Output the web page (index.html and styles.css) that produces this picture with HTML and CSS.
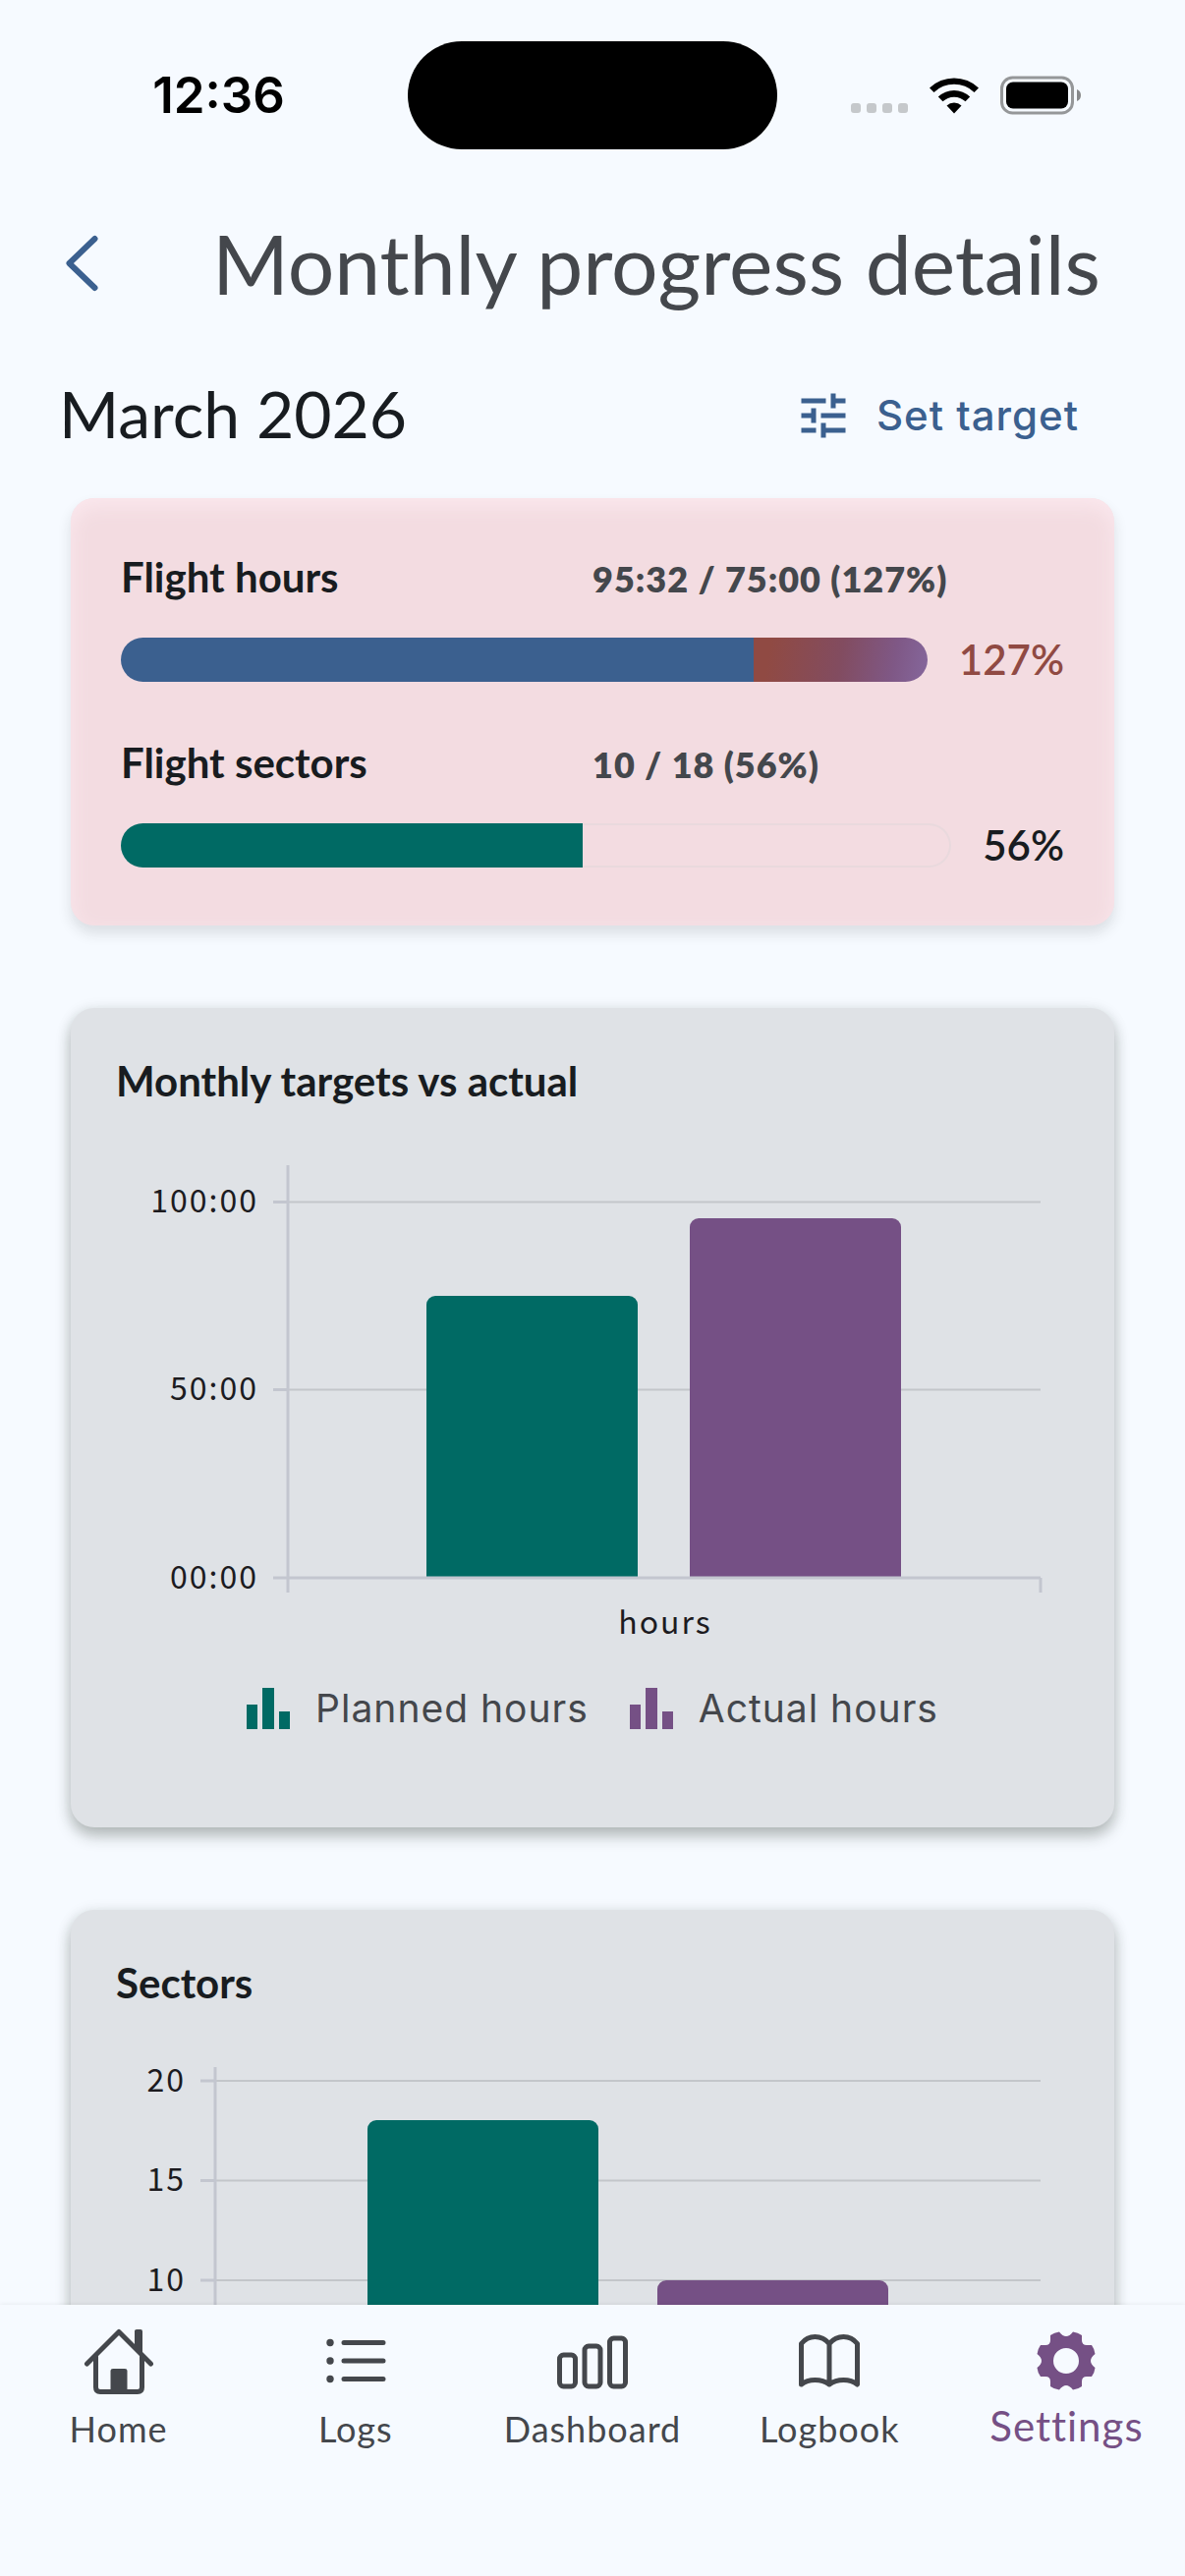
FILE: index.html
```html
<!DOCTYPE html>
<html lang="en">
<head>
  <meta charset="UTF-8">
  <meta name="viewport" content="width=device-width, initial-scale=1.0">
  <title>Monthly progress details</title>
  <link rel="stylesheet" href="styles.css">
</head>
<body>

  <div class="status-bar">
    <span class="time">12:36</span>
    <div class="island"></div>
    <div class="status-icons">
      <svg class="signal" viewBox="0 0 58 10" width="58" height="10">
        <rect x="0" width="10" height="10" rx="3" />
        <rect x="16" width="10" height="10" rx="3" />
        <rect x="32" width="10" height="10" rx="3" />
        <rect x="48" width="10" height="10" rx="3" />
      </svg>
      <svg class="wifi" viewBox="0 0 50 38" width="50" height="38">
        <path d="M0 11.5A36 36 0 0 1 50 11.5L45.500 16A29.500 29.500 0 0 0 4.500 16Z" />
        <path d="M8.800 20.500A23.500 23.500 0 0 1 41.200 20.500L36.500 25.300A16.500 16.500 0 0 0 13.500 25.300Z" />
        <path d="M17.500 29.500A11 11 0 0 1 32.500 29.500L25 37.500Z" />
      </svg>
      <svg class="battery" viewBox="0 0 82 40" width="82" height="40">
        <rect x="1.500" y="2" width="72" height="36" rx="11" fill="none" stroke="#959799" stroke-width="3" />
        <rect x="6" y="6.500" width="63" height="27" rx="7" />
        <path d="M78 14a6.500 6.500 0 0 1 0 12z" fill="#87898b" />
      </svg>
    </div>
  </div>

  <header class="app-bar">
    <button class="back" aria-label="Back">
      <svg viewBox="0 0 34 58" width="34" height="58">
        <path d="M30.500 4L4.500 29L30.500 54" fill="none" stroke="currentColor" stroke-width="6" stroke-linecap="round" stroke-linejoin="round" />
      </svg>
    </button>
    <h1>Monthly progress details</h1>
  </header>

  <main>
    <div class="month-row">
      <h2>March 2026</h2>
      <button class="set-target">
        <svg viewBox="0 0 24 24" width="60" height="60">
          <path fill="currentColor" d="M3 17v2h6v-2H3zM3 5v2h10V5H3zm10 16v-2h8v-2h-8v-2h-2v6h2zM7 9v2H3v2h4v2h2V9H7zm14 4v-2H11v2h10zm-6-4h2V7h4V5h-4V3h-2v6z" />
        </svg>
        <span>Set target</span>
      </button>
    </div>

    <!-- Progress against the monthly targets -->
    <section class="card progress-card">
      <div class="progress">
        <h3>Flight hours</h3>
        <p>95:32 / 75:00 (127%)</p>
        <div class="meter">
          <div class="track full">
            <div class="fill hours" style="width: 78.4%"></div>
            <div class="over"></div>
          </div>
          <span class="percent exceeded">127%</span>
        </div>
      </div>
      <div class="progress">
        <h3>Flight sectors</h3>
        <p>10 / 18 (56%)</p>
        <div class="meter">
          <div class="track">
            <div class="fill sectors" style="width: 55.6%"></div>
          </div>
          <span class="percent">56%</span>
        </div>
      </div>
    </section>

    <section class="card chart-card">
      <h3>Monthly targets vs actual</h3>
      <svg class="chart" viewBox="0 0 970 500" role="img" aria-label="Planned and actual hours">
        <path class="grid" d="M175 42.500H941M175 233.500H941" />
        <path class="axis" d="M160 42.500H175M160 233.500H175M175 5V440M941 425V440" />
        <path class="planned" d="M316 425V147a9 9 0 0 1 9-9H522a9 9 0 0 1 9 9V425Z" />
        <path class="actual" d="M584 425V68a9 9 0 0 1 9-9H790a9 9 0 0 1 9 9V425Z" />
        <path class="axis" d="M160 425H941" />
        <text class="tick end" x="145" y="53">100:00</text>
        <text class="tick end" x="145" y="244">50:00</text>
        <text class="tick end" x="145" y="436">00:00</text>
        <text class="tick middle" x="559" y="482">hours</text>
      </svg>
      <div class="legend">
        <span class="legend-item">
          <svg class="planned" viewBox="0 0 44 42" width="44" height="42">
            <path d="M0 17H11V42H0ZM16 0H28V42H16ZM33 24H44V42H33Z" />
          </svg>
          Planned hours
        </span>
        <span class="legend-item">
          <svg class="actual" viewBox="0 0 44 42" width="44" height="42">
            <path d="M0 17H11V42H0ZM16 0H28V42H16ZM33 24H44V42H33Z" />
          </svg>
          Actual hours
        </span>
      </div>
    </section>

    <section class="card chart-card">
      <h3>Sectors</h3>
      <svg class="chart" viewBox="0 0 970 500" role="img" aria-label="Planned and actual sectors">
        <path class="grid" d="M101 19H941M101 120.500H941M101 222H941M101 323.500H941" />
        <path class="axis" d="M86 19H101M86 120.500H101M86 222H101M86 323.500H101M101 5V440M941 425V440" />
        <path class="planned" d="M256 425V68a9 9 0 0 1 9-9H482a9 9 0 0 1 9 9V425Z" />
        <path class="actual" d="M551 425V231a9 9 0 0 1 9-9H777a9 9 0 0 1 9 9V425Z" />
        <path class="axis" d="M86 425H941" />
        <text class="tick end" x="71" y="30">20</text>
        <text class="tick end" x="71" y="131">15</text>
        <text class="tick end" x="71" y="233">10</text>
      </svg>
    </section>
  </main>

  <nav class="tab-bar">
    <a href="#home">
      <svg viewBox="0 0 72 72" width="72" height="72">
        <g fill="none" stroke="currentColor" stroke-width="5" stroke-linecap="round" stroke-linejoin="round">
          <path d="M3.500 39L36 6.500L68.500 39" />
          <path d="M12.500 32V63Q12.500 67.500 17 67.500H55Q59.500 67.500 59.500 63V32" />
        </g>
        <path fill="currentColor" d="M52 5.500Q52 4 54 4H58Q60 4 60 6V31L52 23ZM27.500 67V46Q27.500 44 30 44H42Q44.500 44 44.500 46V67Z" />
      </svg>
      <span>Home</span>
    </a>
    <a href="#logs">
      <svg viewBox="0 0 72 72" width="72" height="72">
        <g fill="currentColor">
          <circle cx="10" cy="17.500" r="3.700" />
          <circle cx="10" cy="36" r="3.700" />
          <circle cx="10" cy="54.500" r="3.700" />
        </g>
        <path d="M24 17.500H64M24 36H64M24 54.500H64" stroke="currentColor" stroke-width="5" stroke-linecap="round" />
      </svg>
      <span>Logs</span>
    </a>
    <a href="#dashboard">
      <svg viewBox="0 0 72 72" width="72" height="72">
        <g fill="none" stroke="currentColor" stroke-width="5">
          <rect x="2.500" y="30" width="16" height="32" rx="4" />
          <rect x="28" y="21" width="16" height="41" rx="4" />
          <rect x="53.500" y="13" width="16" height="49" rx="4" />
        </g>
      </svg>
      <span>Dashboard</span>
    </a>
    <a href="#logbook">
      <svg viewBox="0 0 72 72" width="72" height="72">
        <path d="M36 18.500Q30 11.500 21.500 11.500Q13 11.500 7.500 18.500V60Q13 55.500 21.500 55.500Q30 55.500 36 60Q42 55.500 50.500 55.500Q59 55.500 64.500 60V18.500Q59 11.500 50.500 11.500Q42 11.500 36 18.500V60" fill="none" stroke="currentColor" stroke-width="5" stroke-linecap="round" stroke-linejoin="round" />
      </svg>
      <span>Logbook</span>
    </a>
    <a href="#settings" class="active" aria-current="page">
      <svg viewBox="-36 -36 72 72" width="72" height="72">
        <path fill="currentColor" fill-rule="evenodd" d="M-7-29.500Q-3.500-25 0-25Q3.500-25 7-29.500Q12-29 16-26V-21Q16-16 21-16H26Q29-12 29.500-7Q25-3.500 25 0Q25 3.500 29.500 7Q29 12 26 16H21Q16 16 16 21V26Q12 29 7 29.500Q3.500 25 0 25Q-3.500 25-7 29.500Q-12 29-16 26V21Q-16 16-21 16H-26Q-29 12-29.500 7Q-25 3.500-25 0Q-25-3.500-29.500-7Q-29-12-26-16H-21Q-16-16-16-21V-26Q-12-29-7-29.500ZM0-13A13 13 0 1 0 0 13A13 13 0 1 0 0-13Z" />
      </svg>
      <span>Settings</span>
    </a>
  </nav>

</body>
</html>
```
FILE: styles.css
```css
* {
  box-sizing: border-box;
}
body {
  margin: 0;
  height: 100vh;
  display: flex;
  flex-direction: column;
  overflow: hidden;
  background: #f6faff;
  color: #181c20;
  font-family: Lato, sans-serif;
}
h1, h2, h3, p {
  margin: 0;
}
svg {
  display: block;
  flex-shrink: 0;
}
button {
  border: none;
  background: none;
  padding: 0;
  color: #3b608f;
  cursor: pointer;
}

/* Status bar */
.status-bar {
  display: grid;
  grid-template-columns: 1fr 376px 1fr;
  align-items: center;
  padding-top: 42px;
  color: #000;
}
.time {
  text-align: center;
  padding-left: 30px;
  font: 600 51px/60px Inter, sans-serif;
}
.island {
  height: 110px;
  border-radius: 55px;
  background: #000;
}
.status-icons {
  display: flex;
  align-items: center;
  justify-content: flex-end;
  gap: 22px;
  padding-right: 106px;
}
.signal {
  align-self: flex-end;
  margin-bottom: 2px;
  fill: #c5c8cb;
}

/* Title */
.app-bar {
  display: flex;
  align-items: center;
  padding: 66px 60px 32px;
}
.back {
  width: 156px;
  padding-left: 6px;
}
h1 {
  color: #44474c;
  font-size: 84px;
  font-weight: 400;
  line-height: 100px;
  white-space: nowrap;
}

/* Content */
main {
  flex: 1;
  min-height: 0;
  overflow-y: auto;
  scrollbar-width: none;
  padding: 31px 72px;
}
.month-row {
  display: flex;
  align-items: center;
  justify-content: space-between;
  margin: 0 36px 46px -12px;
}
h2 {
  font-size: 66px;
  font-weight: 400;
  line-height: 80px;
}
.set-target {
  display: flex;
  align-items: center;
  gap: 24px;
  padding-top: 3px;
  font: 500 42px/60px Inter, sans-serif;
  letter-spacing: 1px;
}
.card {
  margin-bottom: 84px;
  border-radius: 24px;
}
h3 {
  font-size: 42px;
  font-weight: 700;
  line-height: 50px;
}

.progress-card {
  display: grid;
  gap: 49px;
  padding: 55px 51px 51px;
  background: #f3dce1;
  box-shadow: inset 0 8px 20px #fbe8ee, 0 8px 14px rgba(40, 40, 40, 0.13);
}
.progress {
  display: grid;
  grid-template-columns: 1fr 1fr;
  align-items: baseline;
  row-gap: 26px;
}
.progress p {
  color: #44474c;
  font-size: 36px;
  font-weight: 800;
  line-height: 50px;
  letter-spacing: 1px;
}
.meter {
  grid-column: 1 / -1;
  display: flex;
  align-items: center;
  gap: 32px;
  height: 62px;
}
.track {
  flex: 1;
  display: flex;
  height: 45px;
  border-radius: 23px;
  overflow: hidden;
  box-shadow: inset 0 0 0 2px #e9d9dd;
}
.track.full {
  box-shadow: none;
}
.fill.hours {
  background: #3b608f;
}
.fill.sectors {
  background: #006a64;
}
.over {
  flex: 1;
  background: linear-gradient(100deg, #904a43 10%, #824c60 50%, #7f5886 80%, #85679c);
}
.percent {
  font-size: 42px;
  font-weight: 600;
}
.exceeded {
  color: #904a43;
}

.chart-card {
  padding: 49px 46px 94px;
  background: #dfe2e6;
  box-shadow: 0 9px 15px rgba(30, 40, 30, 0.27), 0 2px 15px rgba(30, 40, 30, 0.1);
}
.chart {
  width: 100%;
  margin-top: 56px;
  overflow: visible;
}
.grid,
.axis {
  fill: none;
  stroke: #c3c6cf;
  stroke-width: 3;
}
.grid {
  stroke: #c3c6ca;
  stroke-width: 2;
}
.planned {
  fill: #006a64;
}
.actual {
  fill: #755085;
}
.tick {
  fill: #1c1b1f;
  font-family: "Noto Sans CJK JP", sans-serif;
  font-size: 32px;
  letter-spacing: 2px;
}
.end {
  text-anchor: end;
}
.middle {
  text-anchor: middle;
}
.legend {
  display: flex;
  justify-content: center;
  gap: 42px;
  margin-top: 31px;
}
.legend-item {
  display: flex;
  align-items: center;
  gap: 26px;
  color: #44474c;
  font: 400 39px/54px Inter, sans-serif;
  letter-spacing: 1px;
}

/* Bottom tabs */
.tab-bar {
  position: relative;
  display: grid;
  grid-template-columns: repeat(5, 1fr);
  height: 276px;
  padding-top: 21px;
  background: #f6faff;
  box-shadow: 0 -1px 4px rgba(0, 0, 0, 0.06);
}
.tab-bar a {
  display: flex;
  flex-direction: column;
  align-items: center;
  gap: 8px;
  color: #44474c;
  font-size: 36px;
  line-height: 50px;
  letter-spacing: 1px;
  text-decoration: none;
}
.tab-bar .active {
  color: #755085;
  font-size: 42px;
  line-height: 44px;
}
```
